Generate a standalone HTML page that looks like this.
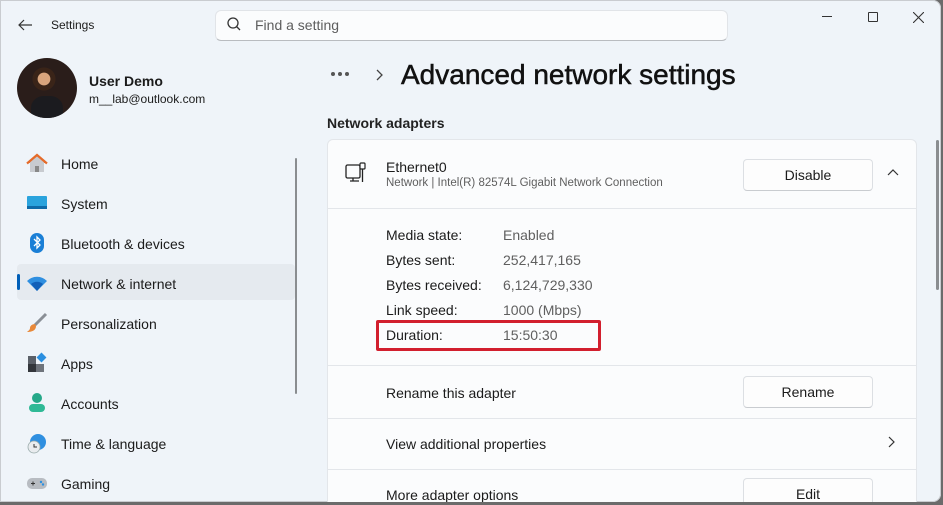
<!DOCTYPE html>
<html><head><meta charset="utf-8"><style>
*{margin:0;padding:0;box-sizing:border-box}
body{width:943px;height:505px;overflow:hidden;background:#6b6b6b;font-family:"Liberation Sans",sans-serif;color:#1b1b1b;position:relative}
.win{position:absolute;left:0;top:0;width:941px;height:502px;background:#eff4f9;box-shadow:inset 0 0 0 1px #c9ccd0;border-radius:0 8px 8px 0;overflow:hidden}
.a{position:absolute;white-space:nowrap}
.nav{position:absolute;left:61px;font-size:14px}
.ico{position:absolute;left:26px;width:22px;height:22px}
.card{position:absolute;left:327px;width:590px;background:#fbfcfd;border:1px solid #e3e6ea}
.btn{position:absolute;left:743px;width:130px;height:32px;background:#fdfdfd;border:1px solid #dcdfe3;border-bottom-color:#c9ccd0;border-radius:4px;font-size:14px;text-align:center;line-height:30px}
.lbl{position:absolute;left:386px;font-size:14px}
.val{position:absolute;left:503px;font-size:14px;color:#5f5f5f}
</style></head><body><div class="win">
<svg class="a" style="left:17px;top:18px" width="16" height="14"><path d="M15 7H2M7 2L2 7l5 5" stroke="#333" stroke-width="1.2" fill="none"/></svg>
<div class="a" style="left:51px;top:18px;font-size:12px">Settings</div>
<div class="a" style="left:215px;top:10px;width:513px;height:31px;background:#fbfcfd;border:1px solid #e1e4e8;border-bottom-color:#b9bcc0;border-radius:6px"></div>
<svg class="a" style="left:226px;top:16px" width="16" height="16"><circle cx="7" cy="7" r="5" stroke="#333" stroke-width="1.3" fill="none"/><path d="M10.5 10.5L14 14" stroke="#333" stroke-width="1.3"/></svg>
<div class="a" style="left:255px;top:17px;font-size:14px;color:#5d5d5d">Find a setting</div>
<div class="a" style="left:822px;top:16px;width:10px;height:1px;background:#333"></div>
<div class="a" style="left:868px;top:12px;width:10px;height:10px;border:1px solid #333;border-radius:1px"></div>
<svg class="a" style="left:913px;top:12px" width="11" height="11"><path d="M0 0L11 11M11 0L0 11" stroke="#333" stroke-width="1.1"/></svg>

<div class="a" style="left:17px;top:58px;width:60px;height:60px;border-radius:50%;background:radial-gradient(circle at 45% 35%,#d9a57d 0 12%,#3a2418 13% 22%,#2a1d1a 23%);overflow:hidden"><div style="position:absolute;left:14px;top:38px;width:32px;height:30px;background:#1b1b1f;border-radius:40% 40% 0 0"></div></div>
<div class="a" style="left:89px;top:73px;font-size:14px;font-weight:bold">User Demo</div>
<div class="a" style="left:89px;top:92px;font-size:12px">m__lab@outlook.com</div>

<div class="a" style="left:17px;top:264px;width:278px;height:36px;background:#e5eaef;border-radius:4px"></div>
<div class="a" style="left:17px;top:274px;width:3px;height:16px;background:#005fb8;border-radius:2px"></div>
<div class="a" style="left:295px;top:158px;width:2px;height:236px;background:#8a8d90;border-radius:1px"></div>

<svg class="ico" style="top:152px" viewBox="0 0 22 22"><path d="M2 11L11 3l9 8" fill="#e97c3a"/><path d="M4 10v10h14V10L11 4z" fill="#c8cbd0"/><rect x="9" y="14" width="4" height="6" fill="#888"/><path d="M1 11.5L11 3l10 8.5" stroke="#e56b2a" stroke-width="2.2" fill="none"/></svg>
<div class="nav" style="top:156px">Home</div>
<svg class="ico" style="top:192px" viewBox="0 0 22 22"><rect x="1" y="4" width="20" height="13" rx="1" fill="#2aa3dd"/><rect x="1" y="14" width="20" height="3" fill="#0e6aa8"/></svg>
<div class="nav" style="top:196px">System</div>
<svg class="ico" style="top:232px" viewBox="0 0 22 22"><rect x="4" y="1" width="14" height="20" rx="7" fill="#1a7fd6"/><path d="M8 7l6 6-3 3V5l3 3-6 6" stroke="#fff" stroke-width="1.3" fill="none"/></svg>
<div class="nav" style="top:236px">Bluetooth &amp; devices</div>
<svg class="ico" style="top:272px" viewBox="0 0 22 22"><path d="M1 9a14 14 0 0 1 20 0L11 19z" fill="#2f8fe0"/><path d="M5 12a9 9 0 0 1 12 0L11 19z" fill="#1260b8"/></svg>
<div class="nav" style="top:276px">Network &amp; internet</div>
<svg class="ico" style="top:312px" viewBox="0 0 22 22"><path d="M20 2L9 13" stroke="#8a8f96" stroke-width="3"/><path d="M9 12c-3 0-5 2-5 4s-2 3-3 4c4 0 9-1 9-6z" fill="#e8893a"/></svg>
<div class="nav" style="top:316px">Personalization</div>
<svg class="ico" style="top:352px" viewBox="0 0 22 22"><rect x="2" y="4" width="8" height="8" fill="#5b6068"/><rect x="2" y="12" width="8" height="8" fill="#33363b"/><rect x="10" y="12" width="8" height="8" fill="#6f747c"/><rect x="12" y="2" width="7" height="7" transform="rotate(45 15.5 5.5)" fill="#2b8fe0"/></svg>
<div class="nav" style="top:356px">Apps</div>
<svg class="ico" style="top:392px" viewBox="0 0 22 22"><circle cx="11" cy="6" r="5" fill="#25a889"/><rect x="3" y="12" width="16" height="8" rx="4" fill="#2fb996"/></svg>
<div class="nav" style="top:396px">Accounts</div>
<svg class="ico" style="top:432px" viewBox="0 0 22 22"><circle cx="12" cy="10" r="8" fill="#2f8fe0"/><circle cx="8" cy="15" r="6" fill="#e9ecef" stroke="#9aa" stroke-width=".8"/><path d="M8 12v3h3" stroke="#333" fill="none"/></svg>
<div class="nav" style="top:436px">Time &amp; language</div>
<svg class="ico" style="top:472px" viewBox="0 0 22 22"><rect x="1" y="6" width="20" height="11" rx="5" fill="#b8bcc2"/><path d="M5 11.5h4M7 9.5v4" stroke="#333"/><circle cx="15" cy="10" r="1.2" fill="#2b8fe0"/><circle cx="17" cy="12.5" r="1.2" fill="#2b8fe0"/></svg>
<div class="nav" style="top:476px">Gaming</div>

<div class="a" style="left:331px;top:72px;width:4px;height:4px;border-radius:2px;background:#555;box-shadow:7px 0 #555,14px 0 #555"></div>
<svg class="a" style="left:375px;top:68px" width="10" height="14"><path d="M2 2l5 5-5 5" stroke="#444" stroke-width="1.3" fill="none"/></svg>
<div class="a" style="left:401px;top:59px;font-size:28px;color:#111;-webkit-text-stroke:0.5px #111">Advanced network settings</div>
<div class="a" style="left:327px;top:115px;font-size:14px;font-weight:bold;color:#222">Network adapters</div>

<div class="card" style="top:139px;height:70px;border-radius:6px 6px 0 0"></div>
<svg class="a" style="left:344px;top:162px" width="24" height="24"><rect x="2" y="3" width="14" height="13" rx="1.5" stroke="#222" stroke-width="1.3" fill="none"/><path d="M6 19h9M9 16v3" stroke="#222" stroke-width="1.3"/><rect x="16" y="1" width="5" height="6" rx="1" stroke="#222" stroke-width="1.2" fill="#fbfcfd"/><path d="M18.5 7v13" stroke="#222" stroke-width="1.3"/></svg>
<div class="a" style="left:386px;top:159px;font-size:14px">Ethernet0</div>
<div class="a" style="left:386px;top:177px;font-size:11.5px;color:#5f5f5f">Network | Intel(R) 82574L Gigabit Network Connection</div>
<div class="btn" style="top:159px">Disable</div>
<svg class="a" style="left:886px;top:168px" width="14" height="10"><path d="M2 7l5-5 5 5" stroke="#333" stroke-width="1.2" fill="none"/></svg>

<div class="card" style="top:208px;height:158px"></div>
<div class="lbl" style="top:227px">Media state:</div><div class="val" style="top:227px">Enabled</div>
<div class="lbl" style="top:252px">Bytes sent:</div><div class="val" style="top:252px">252,417,165</div>
<div class="lbl" style="top:277px">Bytes received:</div><div class="val" style="top:277px">6,124,729,330</div>
<div class="lbl" style="top:302px">Link speed:</div><div class="val" style="top:302px">1000 (Mbps)</div>
<div class="lbl" style="top:327px">Duration:</div><div class="val" style="top:327px">15:50:30</div>
<div class="a" style="left:376px;top:320px;width:225px;height:31px;border:3px solid #d21f2e;border-radius:2px"></div>

<div class="card" style="top:365px;height:54px"></div>
<div class="lbl" style="top:385px">Rename this adapter</div>
<div class="btn" style="top:376px">Rename</div>
<div class="card" style="top:418px;height:52px"></div>
<div class="lbl" style="top:436px">View additional properties</div>
<svg class="a" style="left:887px;top:435px" width="10" height="14"><path d="M2 2l5 5-5 5" stroke="#333" stroke-width="1.2" fill="none"/></svg>
<div class="card" style="top:469px;height:40px"></div>
<div class="lbl" style="top:487px">More adapter options</div>
<div class="btn" style="top:478px">Edit</div>
<div class="a" style="left:936px;top:140px;width:3px;height:150px;background:#8a8d90;border-radius:2px"></div>
</div></body></html>
